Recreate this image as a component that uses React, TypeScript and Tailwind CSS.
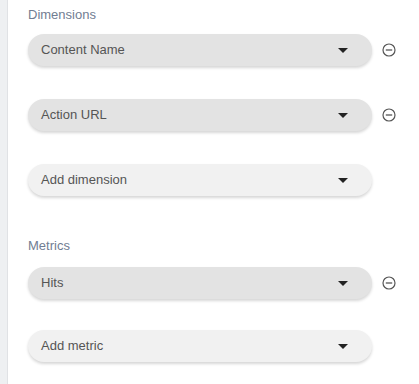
import React from "react";

function Caret() {
  return (
    <svg width="10" height="5" viewBox="0 0 10 5" className="shrink-0">
      <path d="M0 0 L10 0 L5 5 Z" fill="#222" />
    </svg>
  );
}

function MinusCircle() {
  return (
    <button className="ml-[10px] flex h-[14px] w-[14px] items-center justify-center">
      <svg width="14" height="14" viewBox="0 0 14 14">
        <circle cx="7" cy="7" r="6" fill="none" stroke="#555" strokeWidth="1.2" />
        <line x1="3.8" y1="7" x2="10.2" y2="7" stroke="#555" strokeWidth="1.3" />
      </svg>
    </button>
  );
}

function Pill({ label, empty, removable }: { label: string; empty?: boolean; removable?: boolean }) {
  return (
    <div className="flex items-center">
      <div
        className={
          "flex h-8 w-[344px] items-center justify-between rounded-full pl-[13px] pr-[24px] shadow-[0_2px_3px_rgba(0,0,0,0.16)] " +
          (empty ? "bg-[#f1f1f1]" : "bg-[#e3e3e3]")
        }
      >
        <span className="text-[13px] text-[#555]">{label}</span>
        <Caret />
      </div>
      {removable && <MinusCircle />}
    </div>
  );
}

export default function App() {
  return (
    <div className="flex h-[384px] w-[419px] bg-white font-['Liberation_Sans',Arial,sans-serif]">
      <div className="w-[8px] shrink-0 border-r border-[#e0e2e5] bg-[#eef0f2]" />
      <div className="flex flex-col pl-[20px]">
        <div className="mt-[7px] text-[13px] leading-4 text-[#717d92]">Dimensions</div>
        <div className="mt-[11px]">
          <Pill label="Content Name" removable />
        </div>
        <div className="mt-[33px]">
          <Pill label="Action URL" removable />
        </div>
        <div className="mt-[33px]">
          <Pill label="Add dimension" empty />
        </div>
        <div className="mt-[42px] text-[13px] leading-4 text-[#717d92]">Metrics</div>
        <div className="mt-[13px]">
          <Pill label="Hits" removable />
        </div>
        <div className="mt-[31px]">
          <Pill label="Add metric" empty />
        </div>
      </div>
    </div>
  );
}
